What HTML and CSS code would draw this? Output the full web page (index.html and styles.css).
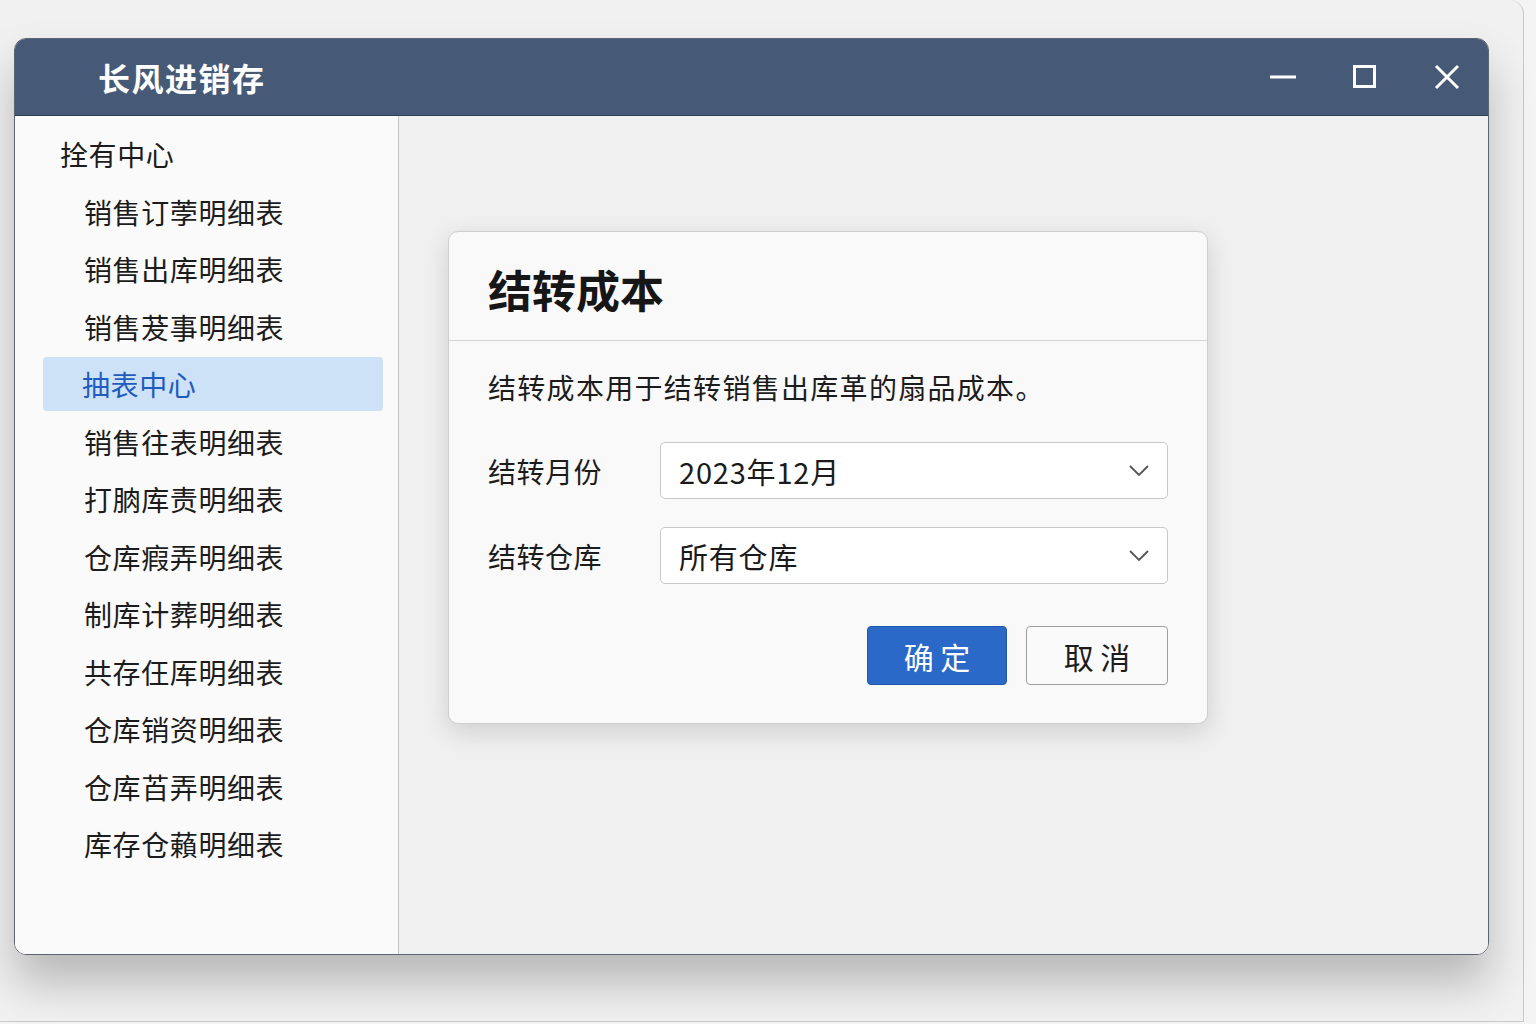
FILE: index.html
```html
<!DOCTYPE html>
<html lang="zh-CN">
<head>
    <meta charset="UTF-8">
    <meta name="viewport" content="width=device-width, initial-scale=1.0">
    <title>长风进销存</title>
    <link rel="stylesheet" href="styles.css">
</head>
<body>
    <div class="desktop">
        <div class="window">
            <div class="titlebar">
                <div class="app-title">长风进销存</div>
                <div class="controls">
                    <span class="ctl">
                        <svg width="28" height="28" viewBox="0 0 28 28"><line x1="1" y1="14" x2="27" y2="14" stroke="#fff" stroke-width="3"/></svg>
                    </span>
                    <span class="ctl">
                        <svg width="28" height="28" viewBox="0 0 28 28"><rect x="3.5" y="3.5" width="20" height="20" fill="none" stroke="#fff" stroke-width="3"/></svg>
                    </span>
                    <span class="ctl">
                        <svg width="28" height="28" viewBox="0 0 28 28"><path d="M3 3 L25 25 M25 3 L3 25" stroke="#fff" stroke-width="3" fill="none"/></svg>
                    </span>
                </div>
            </div>
            <div class="body">
                <div class="sidebar">
                    <div class="side-head">拴有中心</div>
                    <div class="side-item">销售订荸明细表</div>
                    <div class="side-item">销售出库明细表</div>
                    <div class="side-item">销售茇事明细表</div>
                    <div class="side-item active">抽表中心</div>
                    <div class="side-item">销售往表明细表</div>
                    <div class="side-item">打朒库责明细表</div>
                    <div class="side-item">仓库瘕弄明细表</div>
                    <div class="side-item">制库计葬明细表</div>
                    <div class="side-item">共存仼厍明细表</div>
                    <div class="side-item">仓库销资明细表</div>
                    <div class="side-item">仓库苩弄明细表</div>
                    <div class="side-item">库存仓藾明细表</div>
                </div>
                <div class="main">
                    <div class="dialog">
                        <div class="dialog-header">结转成本</div>
                        <div class="dialog-body">
                            <div class="desc">结转成本用于结转销售出库革的扇品成本。</div>
                            <div class="form-row">
                                <div class="label">结转月份</div>
                                <div class="select">
                                    <span>2023年12月</span>
                                    <svg width="20" height="12" viewBox="0 0 20 12"><path d="M1 1 L10 10 L19 1" fill="none" stroke="#555" stroke-width="1.8"/></svg>
                                </div>
                            </div>
                            <div class="form-row">
                                <div class="label">结转仓库</div>
                                <div class="select">
                                    <span>所有仓库</span>
                                    <svg width="20" height="12" viewBox="0 0 20 12"><path d="M1 1 L10 10 L19 1" fill="none" stroke="#555" stroke-width="1.8"/></svg>
                                </div>
                            </div>
                            <div class="actions">
                                <button class="btn btn-primary">确 定</button>
                                <button class="btn btn-default">取 消</button>
                            </div>
                        </div>
                    </div>
                </div>
            </div>
        </div>
    </div>
</body>
</html>
```

FILE: styles.css
```css
* {
    margin: 0;
    padding: 0;
    box-sizing: border-box;
}

body {
    background-color: #f4f4f4;
    font-family: "Noto Sans CJK SC", "Noto Sans", sans-serif;
    color: #1c1c1c;
    width: 1536px;
    height: 1024px;
    overflow: hidden;
}

.desktop {
    width: 1524px;
    height: 1022px;
    background-color: #f1f1f1;
    border-right: 1px solid #c9c9c9;
    border-bottom: 1px solid #c9c9c9;
    border-top-right-radius: 14px;
    padding: 38px 0 0 14px;
}

.window {
    width: 1475px;
    height: 917px;
    border: 1px solid #5f6570;
    border-radius: 12px;
    overflow: hidden;
    display: flex;
    flex-direction: column;
    box-shadow: 0 28px 46px rgba(0, 0, 0, 0.24);
}

.titlebar {
    height: 77px;
    background-color: #465a77;
    border-bottom: 1px solid #2e3d52;
    display: flex;
    align-items: center;
    padding-left: 83px;
    flex-shrink: 0;
}

.app-title {
    color: #fff;
    font-size: 32px;
    font-weight: 700;
    letter-spacing: 1.5px;
}

.controls {
    margin-left: auto;
    display: flex;
}

.ctl {
    width: 82px;
    height: 76px;
    display: flex;
    align-items: center;
    justify-content: center;
}

.body {
    flex: 1;
    display: flex;
}

.sidebar {
    width: 384px;
    background-color: #fafafa;
    border-right: 1px solid #c6c6c6;
    padding-top: 11px;
}

.side-head,
.side-item {
    height: 54px;
    margin: 0 15px 3.5px 28px;
    display: flex;
    align-items: center;
    font-size: 28px;
    letter-spacing: 0.6px;
    border-radius: 4px;
}

.side-head {
    padding-left: 17px;
}

.side-item {
    padding-left: 41px;
}

.side-item.active {
    background-color: #cde2f7;
    color: #1f5cbd;
    padding-left: 39px;
}

.main {
    flex: 1;
    background-color: #f0f0f0;
    padding: 115px 0 0 49px;
}

.dialog {
    width: 760px;
    height: 493px;
    background-color: #f9f9f9;
    border: 1px solid #cdcdcd;
    border-radius: 10px;
    box-shadow: 0 8px 26px rgba(0, 0, 0, 0.14);
}

.dialog-header {
    height: 109px;
    padding: 6px 0 0 39px;
    border-bottom: 1px solid #d4d4d4;
    display: flex;
    align-items: center;
    font-size: 44px;
    font-weight: 700;
    color: #161616;
}

.dialog-body {
    padding: 0 39px;
}

.desc {
    margin-top: 26px;
    height: 40px;
    line-height: 40px;
    font-size: 28px;
    letter-spacing: 1.3px;
}

.form-row {
    display: flex;
    align-items: center;
    margin-top: 35px;
}

.form-row + .form-row {
    margin-top: 28px;
}

.label {
    width: 172px;
    font-size: 28px;
    letter-spacing: 0.5px;
}

.select {
    width: 508px;
    height: 57px;
    background-color: #fff;
    border: 1px solid #c8c8c8;
    border-radius: 5px;
    display: flex;
    align-items: center;
    justify-content: space-between;
    padding: 0 18px 0 18px;
    font-size: 29px;
    letter-spacing: 0.8px;
    color: #1a1a1a;
}

.actions {
    display: flex;
    justify-content: flex-end;
    gap: 19px;
    margin-top: 42px;
}

.btn {
    height: 59px;
    font-family: "Noto Sans CJK SC", sans-serif;
    font-size: 30px;
    border-radius: 4px;
    cursor: pointer;
}

.btn-primary {
    width: 140px;
    background-color: #2b69c9;
    border: 1px solid #2257ad;
    color: #fff;
}

.btn-default {
    width: 142px;
    background-color: #fafafa;
    border: 1px solid #9e9e9e;
    color: #1c1c1c;
}
```
